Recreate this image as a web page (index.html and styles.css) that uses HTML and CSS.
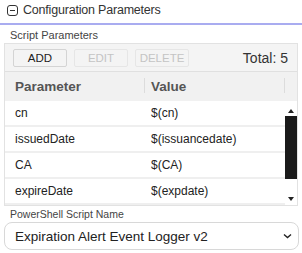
FILE: index.html
```html
<!DOCTYPE html>
<html lang="en">
<head>
    <meta charset="UTF-8">
    <meta name="viewport" content="width=device-width, initial-scale=1.0">
    <title>Configuration Parameters</title>
    <link rel="stylesheet" href="styles.css">
</head>
<body>
    <div class="panel">
        <div class="panel-header">
            <svg class="collapse-icon" width="11" height="11" viewBox="0 0 11 11">
                <rect x="0.5" y="0.5" width="10" height="10" rx="2.5" fill="none" stroke="#333"/>
                <line x1="3" y1="5.5" x2="8" y2="5.5" stroke="#333"/>
            </svg>
            <span>Configuration Parameters</span>
        </div>

        <div class="field-label">Script Parameters</div>
        <div class="grid">
            <div class="toolbar">
                <button class="btn">ADD</button>
                <button class="btn" disabled>EDIT</button>
                <button class="btn" disabled>DELETE</button>
                <span class="total">Total: 5</span>
            </div>
            <div class="grid-head">
                <div class="col-param">Parameter</div>
                <div class="col-value">Value</div>
                <div class="col-spacer"></div>
            </div>
            <div class="grid-body">
                <div class="rows">
                    <div class="row"><div class="col-param">cn</div><div class="col-value">$(cn)</div></div>
                    <div class="row"><div class="col-param">issuedDate</div><div class="col-value">$(issuancedate)</div></div>
                    <div class="row"><div class="col-param">CA</div><div class="col-value">$(CA)</div></div>
                    <div class="row"><div class="col-param">expireDate</div><div class="col-value">$(expdate)</div></div>
                </div>
                <div class="scrollbar">
                    <div class="arrow up"></div>
                    <div class="thumb"></div>
                    <div class="track"></div>
                    <div class="arrow down"></div>
                </div>
            </div>
        </div>

        <div class="field-label small">PowerShell Script Name</div>
        <div class="select">
            <span>Expiration Alert Event Logger v2</span>
            <svg width="9" height="6" viewBox="0 0 9 6">
                <polyline points="1,1.5 4.5,4.5 8,1.5" fill="none" stroke="#222" stroke-width="1.4"/>
            </svg>
        </div>
    </div>
</body>
</html>
```

FILE: styles.css
```css
* {
    margin: 0;
    padding: 0;
    box-sizing: border-box;
    font-family: "Liberation Sans", Arial, sans-serif;
}

body {
    background: white;
    color: #222;
}

.panel {
    width: 302px;
}

.panel-header {
    display: flex;
    align-items: center;
    gap: 5px;
    height: 25px;
    padding: 0 0 3px 7px;
    border-bottom: 2px solid #a9acf0;
    font-size: 12.5px;
    letter-spacing: -0.2px;
    color: #333;
}

.field-label {
    padding: 4px 0 1px 10px;
    line-height: 13px;
    font-size: 11px;
    color: #444;
}

.field-label.small {
    padding: 2px 0 1px 10px;
    font-size: 10.5px;
}

.grid {
    margin: 0 4px;
    border: 1px solid #e2e2e2;
}

.toolbar {
    display: flex;
    align-items: center;
    gap: 7px;
    height: 28px;
    padding: 0 9px 0 8px;
    background: #f4f4f4;
    border-bottom: 1px solid #e0e0e0;
}

.btn {
    width: 54px;
    height: 18px;
    font-size: 11.5px;
    color: #222;
    background: #f4f4f4;
    border: 1px solid #d4d4d4;
    border-radius: 2px;
}

.btn:disabled {
    color: #c4c4c4;
    border-color: #e6e6e6;
}

.total {
    margin-left: auto;
    font-size: 14px;
    color: #333;
}

.grid-head {
    display: flex;
    height: 29px;
    align-items: center;
    background: #f1f1f1;
    font-size: 13.5px;
    font-weight: bold;
    color: #555;
}

.grid-head .col-param,
.grid-head .col-value {
    position: relative;
}

.grid-head .col-param::after,
.grid-head .col-value::after {
    content: '';
    position: absolute;
    right: 0;
    top: -1px;
    height: 15px;
    border-right: 1px solid #dcdcdc;
}

.col-param {
    width: 140px;
    padding-left: 10px;
}

.col-value {
    width: 140px;
    padding-left: 6px;
}

.col-spacer {
    flex: 1;
}

.grid-body {
    display: flex;
}

.rows {
    flex: 1;
}

.row {
    display: flex;
    align-items: center;
    height: 26px;
    border-bottom: 2px solid #efefef;
    font-size: 12px;
    color: #222;
}

.scrollbar {
    width: 12px;
    display: flex;
    flex-direction: column;
}

.arrow {
    height: 15px;
    position: relative;
}

.arrow::after {
    content: '';
    position: absolute;
    left: 3px;
    border-left: 3.5px solid transparent;
    border-right: 3.5px solid transparent;
}

.arrow.up::after {
    top: 8px;
    border-bottom: 4px solid #222;
}

.arrow.down {
    height: 12px;
}

.arrow.down::after {
    top: 4px;
    border-top: 4px solid #222;
}

.thumb {
    height: 63px;
    background: #1a1a1a;
}

.track {
    flex: 1;
}

.select {
    display: flex;
    align-items: center;
    justify-content: space-between;
    margin: 0 3px 0 4px;
    height: 28px;
    padding: 0 6px 0 10px;
    border: 1px solid #d8d8d8;
    border-radius: 8px;
    font-size: 13.5px;
    color: #222;
}
```
